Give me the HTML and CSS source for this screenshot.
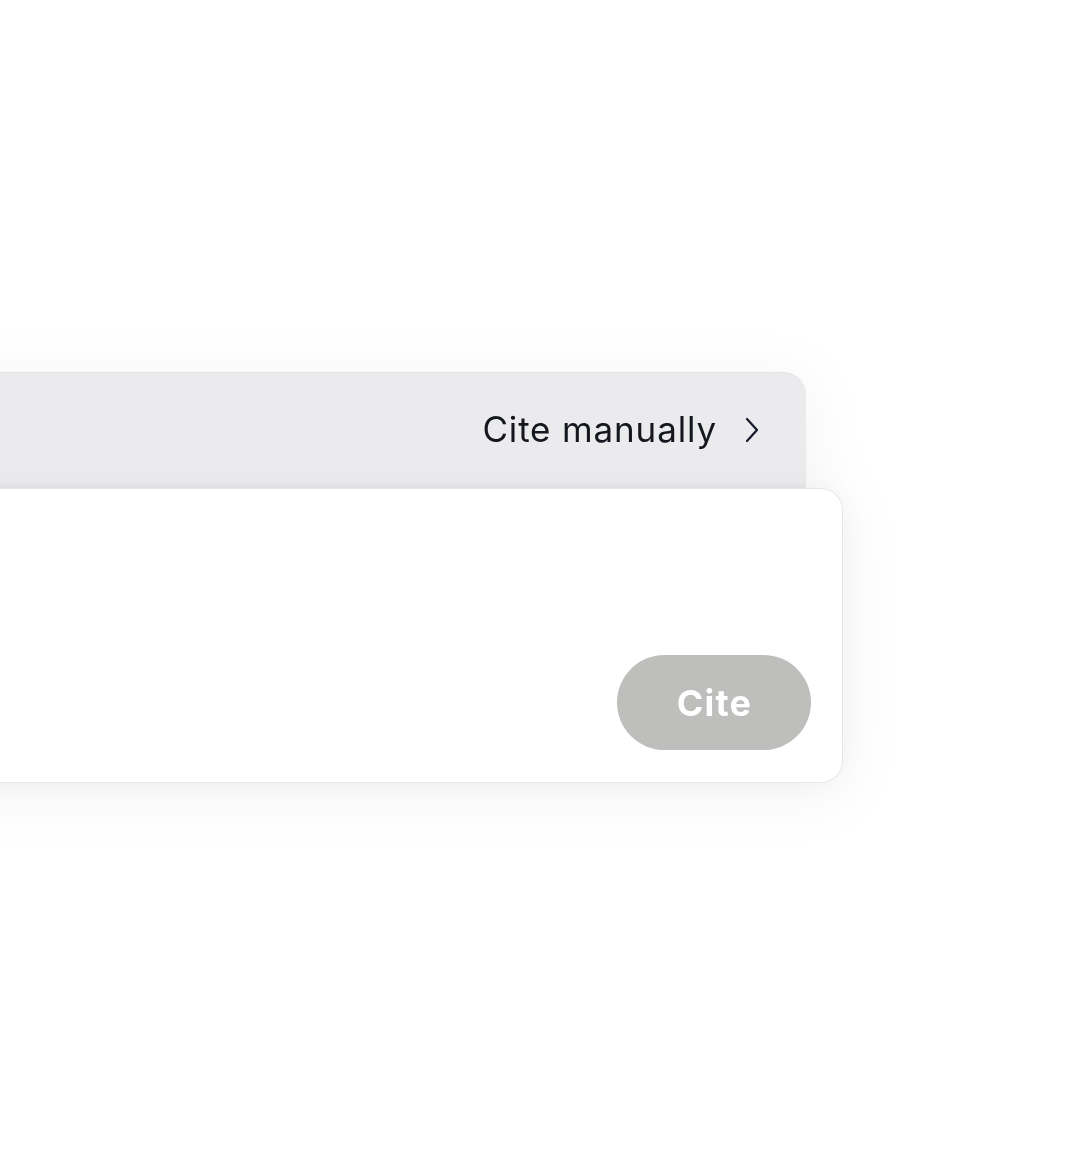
FILE: index.html
```html
<!DOCTYPE html>
<html>
<head>
<meta charset="utf-8">
<link rel="stylesheet" href="styles.css">
</head>
<body>
<div class="stage">
  <div class="stack">
    <div class="back-card">
      <span class="manual-label">Cite manually</span>
      <svg class="chevron" width="14" height="26" viewBox="0 0 14 26" aria-hidden="true">
        <path d="M2 2 L12 13 L2 24" fill="none" stroke="#151826" stroke-width="2.2" stroke-linecap="round" stroke-linejoin="round"/>
      </svg>
    </div>
    <div class="front-card">
      <button class="cite-btn" type="button">Cite</button>
    </div>
  </div>
</div>
</body>
</html>
```
FILE: styles.css
```css
html, body {
  margin: 0;
  padding: 0;
  background: #ffffff;
  overflow: hidden;
  width: 1080px;
  height: 1152px;
}
body {
  font-family: Inter, "Noto Sans", sans-serif;
}
.stage {
  padding-top: 372px;
}
.stack {
  margin-left: -60px;
  width: 903px;
  display: flex;
  flex-direction: column;
  filter: drop-shadow(0 10px 30px rgba(0, 0, 0, 0.05));
}
.back-card {
  width: 866px;
  height: 116px;
  box-sizing: border-box;
  background: #ebebed;
  border-top: 1px solid #e4e4e6;
  border-right: 1px solid #ebebed;
  border-radius: 0 22px 0 0;
  display: flex;
  align-items: center;
  justify-content: flex-end;
  padding-right: 46px;
  padding-bottom: 4px;
  gap: 28px;
  box-shadow: inset 0 -5px 4px -2px rgba(0, 0, 0, 0.035);
}
.manual-label {
  font-size: 35px;
  font-weight: 400;
  color: #15171f;
  letter-spacing: 0.85px;
}
.chevron {
  display: block;
  margin-top: 2px;
}
.front-card {
  width: 903px;
  height: 295px;
  box-sizing: border-box;
  background: #ffffff;
  border: 1px solid #e6e6e6;
  border-left: none;
  border-radius: 0 22px 22px 0;
  display: flex;
  align-items: flex-end;
  justify-content: flex-end;
  padding: 0 31px 32px 0;
  box-shadow: 0 0 40px rgba(0, 0, 0, 0.04);
}
.cite-btn {
  width: 194px;
  height: 95px;
  border: none;
  border-radius: 48px;
  background: #bebebd;
  color: #ffffff;
  font-family: Inter, "Noto Sans", sans-serif;
  font-weight: 700;
  font-size: 36px;
  letter-spacing: 1.2px;
  padding: 0 0 0 1px;
  cursor: pointer;
}
```
